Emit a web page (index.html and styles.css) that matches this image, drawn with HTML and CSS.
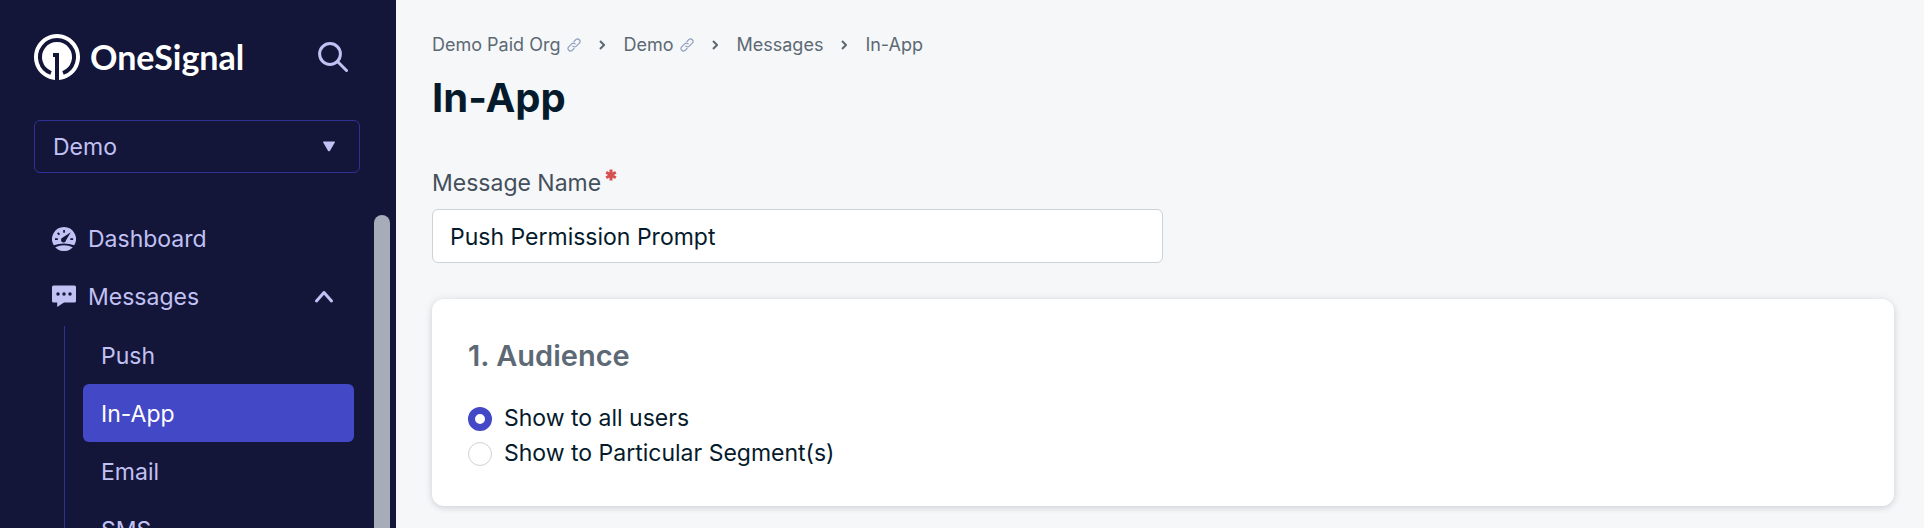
FILE: index.html
```html
<!DOCTYPE html>
<html lang="en">
<head>
<meta charset="utf-8">
<title>In-App</title>
<link rel="stylesheet" href="styles.css">
</head>
<body>
<div class="app">
  <aside class="sidebar">
    <header class="brand">
      <a class="logo" href="#">
        <svg class="logo-mark" viewBox="0 0 46 46" aria-hidden="true">
          <path fill="#fff" d="M21 46A23 23 0 1 1 25 46V19H19V23H21Z"/>
          <path fill="none" stroke="#131539" stroke-width="4" d="M17 39A17 17 0 1 1 29 39"/>
        </svg>
        <span class="logo-name">OneSignal</span>
      </a>
      <button class="search" type="button" aria-label="Search">
        <svg viewBox="0 0 30 30" aria-hidden="true"><circle cx="12" cy="12" r="10.400"/><path d="M19.500 19.500L28.500 28.500"/></svg>
      </button>
    </header>
    <div class="picker">
      <select aria-label="App"><option>Demo</option></select>
      <svg class="picker-arrow" viewBox="0 0 12 10" aria-hidden="true"><path d="M1 0H11Q12.500 0 11.800 1L7 9.200Q6 10.500 5 9.200L.2 1Q-.5 0 1 0Z"/></svg>
    </div>
    <div class="nav-scroll">
      <nav class="nav" aria-label="Main">
        <a class="nav-item" href="#">
          <svg class="nav-icon" viewBox="0 0 24 24" aria-hidden="true">
            <path d="M12 0A12 12 0 0 1 22.200 18.300Q12 14.500 1.800 18.300A12 12 0 0 1 12 0ZM3.200 20.200Q12 16.200 20.800 20.200A12 12 0 0 1 3.200 20.200Z"/>
            <path class="cut" d="M18.800 5.200L14 13.200A2.500 2.500 0 1 1 10.800 10.600ZM11.200 3h1.700v2.800h-1.700ZM3 11.200h2.800v1.700H3ZM18.300 11.200h2.800v1.700h-2.800ZM5 6.500l1.300-1.300 1.800 1.800-1.300 1.300Z"/>
          </svg>
          <span>Dashboard</span>
        </a>
        <a class="nav-item" href="#">
          <svg class="nav-icon" viewBox="0 0 24 24" aria-hidden="true">
            <path d="M1.500 .5H22.500Q24 .5 24 2V16Q24 17.500 22.500 17.500H12L5.200 22V17.500H1.500Q0 17.500 0 16V2Q0 .5 1.500 .5Z"/>
            <g class="cut"><circle cx="6" cy="9" r="1.700"/><circle cx="12" cy="9" r="1.700"/><circle cx="18" cy="9" r="1.700"/></g>
          </svg>
          <span>Messages</span>
          <svg class="nav-chevron" viewBox="0 0 18 12" aria-hidden="true"><path d="M1.500 10L9 1.500L16.500 10"/></svg>
        </a>
        <div class="subnav">
          <a class="sub-item" href="#">Push</a>
          <a class="sub-item active" href="#" aria-current="page">In-App</a>
          <a class="sub-item" href="#">Email</a>
          <a class="sub-item" href="#">SMS</a>
        </div>
      </nav>
      <div class="scroll-thumb"></div>
    </div>
  </aside>
  <main class="content">
    <nav class="crumbs" aria-label="Breadcrumb">
      <a href="#">Demo Paid Org <svg class="link-icon" viewBox="0 0 24 24" aria-hidden="true"><path d="M10 14a4.500 4.500 0 0 0 6 0l5.500-5.500a4.300 4.300 0 0 0-6-6L12 6M14 10a4.500 4.500 0 0 0-6 0L2.500 15.500a4.300 4.300 0 0 0 6 6L12 18"/></svg></a>
      <svg class="sep" viewBox="0 0 6 10" aria-hidden="true"><path d="M1 1L5 5L1 9"/></svg>
      <a href="#">Demo <svg class="link-icon" viewBox="0 0 24 24" aria-hidden="true"><path d="M10 14a4.500 4.500 0 0 0 6 0l5.500-5.500a4.300 4.300 0 0 0-6-6L12 6M14 10a4.500 4.500 0 0 0-6 0L2.500 15.500a4.300 4.300 0 0 0 6 6L12 18"/></svg></a>
      <svg class="sep" viewBox="0 0 6 10" aria-hidden="true"><path d="M1 1L5 5L1 9"/></svg>
      <a href="#">Messages</a>
      <svg class="sep" viewBox="0 0 6 10" aria-hidden="true"><path d="M1 1L5 5L1 9"/></svg>
      <a href="#">In-App</a>
    </nav>
    <h1 class="title">In-App</h1>
    <div class="field">
      <label for="message-name">Message Name
        <svg class="required" viewBox="0 0 12 12" aria-hidden="true"><path d="M6 .5V11.500M1.200 3.200L10.800 8.800M10.800 3.200L1.200 8.800"/></svg></label>
      <input id="message-name" type="text" value="Push Permission Prompt" required>
    </div>
    <section class="card">
      <h2>1. Audience</h2>
      <label class="choice"><input type="radio" name="audience" checked><span>Show to all users</span></label>
      <label class="choice"><input type="radio" name="audience"><span>Show to Particular Segment(s)</span></label>
    </section>
  </main>
</div>
</body>
</html>
```
FILE: styles.css
```css
* { box-sizing: border-box; }
body {
  margin: 0;
  background: #f5f7f9;
  color: #051b2c;
  font: 23px/36px Inter, "Liberation Sans", sans-serif;
}
a { color: inherit; text-decoration: none; }
svg { flex: none; }
.app { display: flex; height: 100vh; overflow: hidden; }

.sidebar {
  display: flex;
  flex-direction: column;
  flex: none;
  width: 396px;
  background: #131539;
  color: #c1c1f3;
}
.brand {
  display: flex;
  align-items: center;
  justify-content: space-between;
  padding: 34px 48px 40px 34px;
}
.logo { display: flex; align-items: center; gap: 10px; color: #fff; }
.logo-mark { width: 46px; height: 46px; }
.logo-name { font: bold 34px/46px Lato, sans-serif; }
.search { display: flex; padding: 0; border: 0; background: none; }
.search svg {
  width: 30px;
  height: 30px;
  fill: none;
  stroke: #c1c1f3;
  stroke-width: 3;
  stroke-linecap: round;
}
.picker { display: grid; align-items: center; margin: 0 36px 21px 34px; }
.picker > * { grid-area: 1 / 1; }
.picker select {
  width: 100%;
  height: 53px;
  padding: 0 18px;
  border: 1px solid #2f3294;
  border-radius: 6px;
  background: none;
  color: inherit;
  font: inherit;
  appearance: none;
}
.picker-arrow {
  width: 12px;
  height: 11px;
  margin-right: 25px;
  justify-self: end;
  fill: #c1c1f3;
  pointer-events: none;
}
.nav-scroll { display: flex; flex: 1; min-height: 0; gap: 20px; padding: 16px 6px 0 34px; overflow: hidden; }
.nav { flex: 1; }
.nav-item { display: flex; align-items: center; height: 58px; padding: 0 21px 0 18px; gap: 12px; }
.nav-icon { width: 24px; height: 24px; fill: #c1c1f3; }
.nav-icon .cut { fill: #131539; }
.nav-chevron {
  width: 18px;
  height: 12px;
  margin-left: auto;
  fill: none;
  stroke: #c1c1f3;
  stroke-width: 3;
  stroke-linecap: round;
  stroke-linejoin: round;
}
.subnav { margin-left: 30px; padding-left: 18px; border-left: 1px solid #2f3294; }
.sub-item { display: block; padding: 12px 18px 10px; border-radius: 6px; }
.sub-item.active { background: #4348c6; color: #fff; }
.scroll-thumb { flex: none; width: 16px; margin-top: 5px; border-radius: 8px 8px 0 0; background: #a6acb8; }

.content { flex: 1; min-width: 0; padding: 32px 30px 22px 36px; }
.crumbs { display: flex; align-items: center; gap: 18px; color: #5d6974; font-size: 18px; line-height: 26px; }
.crumbs a { display: flex; align-items: center; gap: 7px; }
.link-icon { width: 14px; height: 14px; fill: none; stroke: #8d9dbf; stroke-width: 2; stroke-linecap: round; }
.sep { width: 6px; height: 10px; fill: none; stroke: #5d6974; stroke-width: 2; }
.title { margin: 14px 0 0; font-size: 40px; font-weight: 700; line-height: 52px; }
.field { margin-top: 41px; }
.field label { display: flex; align-items: center; gap: 4px; color: #444f5b; }
.required { width: 12px; height: 12px; margin-bottom: 16px; fill: none; stroke: #d65050; stroke-width: 3; }
.field input {
  display: block;
  width: 50%;
  height: 54px;
  margin-top: 8px;
  padding: 2px 17px 0;
  border: 1px solid #ccd2d9;
  border-radius: 6px;
  background: #fff;
  color: inherit;
  font: inherit;
}
.card {
  margin-top: 36px;
  padding: 36px 36px 35px;
  border-radius: 12px;
  background: #fff;
  box-shadow: 0 2px 6px rgba(5, 27, 44, .12), 0 0 12px rgba(5, 27, 44, .06);
}
.card h2 { margin: 0 0 24px; color: #5d6974; font-size: 29px; font-weight: 600; line-height: 42px; }
.choice { display: flex; align-items: center; gap: 12px; line-height: 35px; }
.choice input {
  flex: none;
  width: 24px;
  height: 24px;
  margin: 0;
  border: 1px solid #ccd2d9;
  border-radius: 50%;
  background: #fff;
  appearance: none;
}
.choice input:checked { border: 7px solid #4348c6; }
```
